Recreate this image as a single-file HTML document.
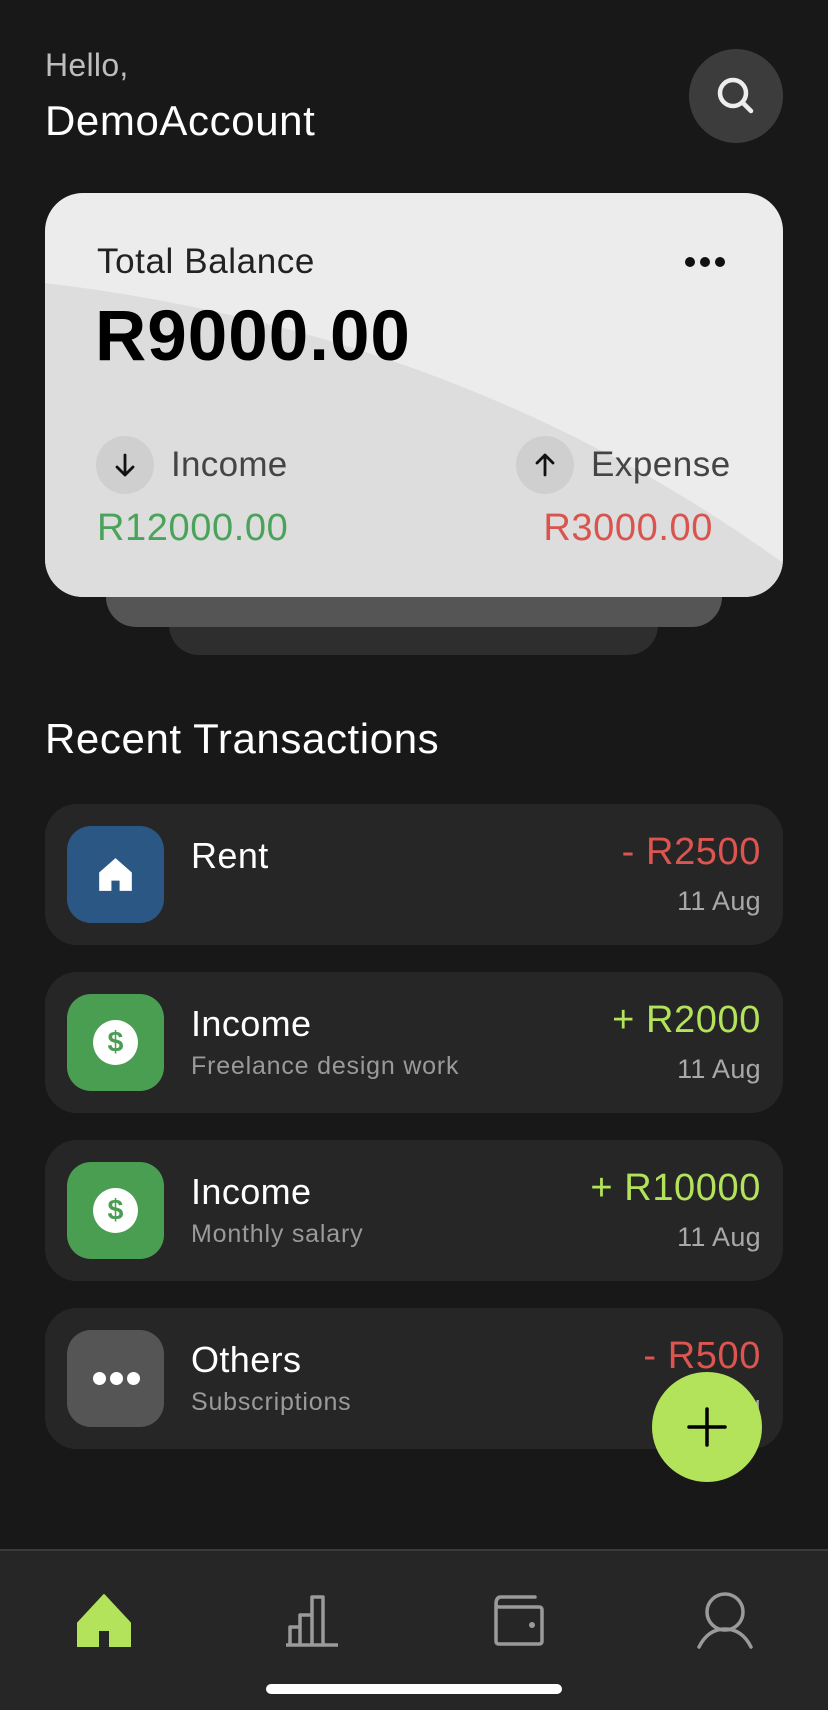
<!DOCTYPE html>
<html><head><meta charset="utf-8"><style>
*{margin:0;padding:0;box-sizing:border-box}
body{width:828px;height:1710px;background:#181818;font-family:"Liberation Sans",sans-serif;position:relative;overflow:hidden;color:#fff}
.a{position:absolute}
.row{position:absolute;left:45px;width:738px;height:141px;background:#262626;border-radius:32px}
.ic{position:absolute;left:22px;top:22px;width:97px;height:97px;border-radius:24px}
.t{position:absolute;left:146px;top:31px;font-size:36px;color:#fff;letter-spacing:0.4px}
.s{position:absolute;left:146px;top:80px;font-size:25px;color:#9a9a9a;letter-spacing:0.8px}
.m{position:absolute;right:22px;top:27px;font-size:38px;letter-spacing:0.6px}
.d{position:absolute;right:22px;top:82px;font-size:27px;color:#a8a8a8;letter-spacing:0.3px}
</style></head><body>
<div class="a" style="left:45px;top:47px;font-size:32px;color:#bdbdbd;letter-spacing:0.3px">Hello,</div>
<div class="a" style="left:45px;top:97px;font-size:42px;color:#fff;letter-spacing:0.6px">DemoAccount</div>
<div class="a" style="left:689px;top:49px;width:94px;height:94px;border-radius:50%;background:#3c3c3c"></div>
<svg class="a" style="left:712px;top:72px" width="48" height="48" viewBox="0 0 48 48"><circle cx="21" cy="21" r="13" fill="none" stroke="#eee" stroke-width="4.5"/><line x1="31" y1="31" x2="39" y2="39" stroke="#eee" stroke-width="4.5" stroke-linecap="round"/></svg>

<div class="a" style="left:169px;top:600px;width:489px;height:55px;border-radius:0 0 30px 30px;background:#2e2e2e"></div>
<div class="a" style="left:106px;top:570px;width:616px;height:57px;border-radius:0 0 30px 30px;background:#555"></div>
<div class="a" style="left:45px;top:193px;width:738px;height:404px;border-radius:38px;overflow:hidden;background:#ececec">
<svg class="a" style="left:0;top:0" width="738" height="404"><path d="M0 90 Q420 140 738 370 L738 404 L0 404 Z" fill="#dddddd"/></svg>
<div class="a" style="left:52px;top:49px;font-size:35px;color:#222;letter-spacing:0.6px">Total Balance</div>
<div class="a" style="left:50px;top:103px;font-size:71px;font-weight:bold;color:#000;letter-spacing:1px">R9000.00</div>
<div class="a" style="left:640px;top:64px;width:10px;height:10px;border-radius:50%;background:#111;box-shadow:15px 0 #111,30px 0 #111"></div>
<div class="a" style="left:51px;top:243px;width:58px;height:58px;border-radius:50%;background:#cfcfcf"></div>
<svg class="a" style="left:63px;top:255px" width="34" height="34"><path d="M17 7V27M9 19L17 27L25 19" fill="none" stroke="#111" stroke-width="2.8" stroke-linecap="round" stroke-linejoin="round"/></svg>
<div class="a" style="left:126px;top:252px;font-size:35px;color:#444;letter-spacing:0.3px">Income</div>
<div class="a" style="left:471px;top:243px;width:58px;height:58px;border-radius:50%;background:#cfcfcf"></div>
<svg class="a" style="left:483px;top:255px" width="34" height="34"><path d="M17 27V7M9 15L17 7L25 15" fill="none" stroke="#111" stroke-width="2.8" stroke-linecap="round" stroke-linejoin="round"/></svg>
<div class="a" style="left:546px;top:252px;font-size:35px;color:#444;letter-spacing:0.5px">Expense</div>
<div class="a" style="left:52px;top:314px;font-size:38px;color:#4aa35a;letter-spacing:0.6px">R12000.00</div>
<div class="a" style="right:70px;top:314px;font-size:38px;color:#d9534f;letter-spacing:0.6px">R3000.00</div>
</div>

<div class="a" style="left:45px;top:715px;font-size:42px;color:#fff;letter-spacing:0.6px">Recent Transactions</div>

<div class="row" style="top:804px"><div class="ic" style="background:#2b5784"></div>
<svg class="a" style="left:46px;top:46px" width="49" height="49" viewBox="0 0 24 24"><path d="M12 4L4 11V20H10V15H14V20H20V11Z" fill="#fff"/></svg>
<div class="t">Rent</div><div class="m" style="color:#dd5550">- R2500</div><div class="d">11 Aug</div></div>

<div class="row" style="top:972px"><div class="ic" style="background:#4a9e52"></div>
<svg class="a" style="left:46px;top:46px" width="49" height="49" viewBox="0 0 48 48"><circle cx="24" cy="24" r="22" fill="#fff"/><text x="24" y="33" text-anchor="middle" font-size="28" font-weight="bold" fill="#4a9e52" font-family="Liberation Sans">$</text></svg>
<div class="t">Income</div><div class="s">Freelance design work</div><div class="m" style="color:#b3e35a">+ R2000</div><div class="d">11 Aug</div></div>

<div class="row" style="top:1140px"><div class="ic" style="background:#4a9e52"></div>
<svg class="a" style="left:46px;top:46px" width="49" height="49" viewBox="0 0 48 48"><circle cx="24" cy="24" r="22" fill="#fff"/><text x="24" y="33" text-anchor="middle" font-size="28" font-weight="bold" fill="#4a9e52" font-family="Liberation Sans">$</text></svg>
<div class="t">Income</div><div class="s">Monthly salary</div><div class="m" style="color:#b3e35a">+ R10000</div><div class="d">11 Aug</div></div>

<div class="row" style="top:1308px"><div class="ic" style="background:#555"></div>
<div class="a" style="left:48px;top:64px;width:13px;height:13px;border-radius:50%;background:#fff;box-shadow:17px 0 #fff,34px 0 #fff"></div>
<div class="t">Others</div><div class="s">Subscriptions</div><div class="m" style="color:#dd5550">- R500</div><div class="d">11 Aug</div></div>

<div class="a" style="left:652px;top:1372px;width:110px;height:110px;border-radius:50%;background:#b3e35a"></div>
<svg class="a" style="left:685px;top:1405px" width="44" height="44"><path d="M22 4V40M4 22H40" stroke="#000" stroke-width="3.5" stroke-linecap="round"/></svg>

<div class="a" style="left:0;top:1549px;width:828px;height:161px;background:#262626;border-top:2px solid #3a3a3a"></div>
<svg class="a" style="left:76px;top:1591px" width="56" height="56" viewBox="0 0 56 56"><path d="M28 4L2 32V56H22V39H34V56H54V32Z" fill="#b3e35a" stroke="#b3e35a" stroke-width="2" stroke-linejoin="round"/></svg>
<svg class="a" style="left:284px;top:1593px" width="56" height="54" viewBox="0 0 56 54"><path d="M2 52H54M6 51V34H16V51M16 51V22H28V51M28 51V4H39V51" fill="none" stroke="#9a9a9a" stroke-width="3.5" stroke-linejoin="round"/></svg>
<svg class="a" style="left:492px;top:1593px" width="54" height="54" viewBox="0 0 54 54"><path d="M4 12V48Q4 51 7 51H47Q50 51 50 48V17Q50 14 47 14H7Q4 14 4 11Q4 4 9 4H43" fill="none" stroke="#9a9a9a" stroke-width="3.5" stroke-linecap="round"/><circle cx="40" cy="32" r="3" fill="#9a9a9a"/></svg>
<svg class="a" style="left:696px;top:1591px" width="58" height="58" viewBox="0 0 58 58"><circle cx="29" cy="21" r="18" fill="none" stroke="#9a9a9a" stroke-width="3.5"/><path d="M3 56Q12 38 29 38Q46 38 55 56" fill="none" stroke="#9a9a9a" stroke-width="3.5" stroke-linecap="round"/></svg>
<div class="a" style="left:266px;top:1684px;width:296px;height:10px;border-radius:5px;background:#fff"></div>
</body></html>
